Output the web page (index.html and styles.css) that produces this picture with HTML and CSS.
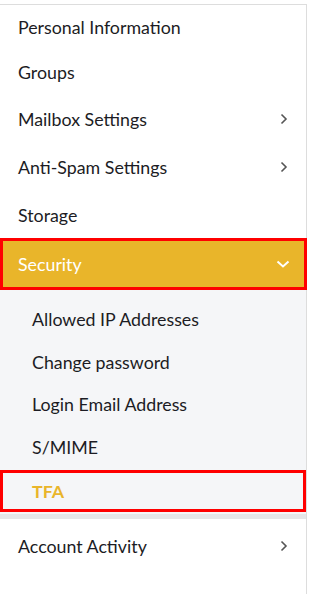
FILE: index.html
```html
<!DOCTYPE html>
<html>
<head>
<meta charset="utf-8">
<link rel="stylesheet" href="styles.css">
</head>
<body>
<nav class="panel">
  <div class="row first"><span>Personal Information</span></div>
  <div class="row second"><span>Groups</span></div>
  <div class="row tall"><span>Mailbox Settings</span>
    <svg class="chev" width="8" height="12" viewBox="0 0 8 12"><path d="M1.5 1.5 L6 6 L1.5 10.5" fill="none" stroke="#555" stroke-width="1.6"/></svg></div>
  <div class="row tall"><span>Anti-Spam Settings</span>
    <svg class="chev" width="8" height="12" viewBox="0 0 8 12"><path d="M1.5 1.5 L6 6 L1.5 10.5" fill="none" stroke="#555" stroke-width="1.6"/></svg></div>
  <div class="row"><span>Storage</span></div>
  <div class="row active"><span>Security</span>
    <svg class="chev-down" width="14" height="8" viewBox="0 0 14 8"><path d="M1.5 1.5 L7 6.5 L12.5 1.5" fill="none" stroke="#fff" stroke-width="2"/></svg></div>
  <div class="sub">
    <div class="sub-row"><span>Allowed IP Addresses</span></div>
    <div class="sub-row"><span>Change password</span></div>
    <div class="sub-row"><span>Login Email Address</span></div>
    <div class="sub-row"><span>S/MIME</span></div>
    <div class="sub-row selected"><span>TFA</span></div>
  </div>
  <div class="row last"><span>Account Activity</span>
    <svg class="chev" width="8" height="12" viewBox="0 0 8 12"><path d="M1.5 1.5 L6 6 L1.5 10.5" fill="none" stroke="#555" stroke-width="1.6"/></svg></div>
</nav>
</body>
</html>
```
FILE: styles.css
```css
html, body {
  margin: 0;
  padding: 0;
  background: #fff;
}
body {
  font-family: Lato, "Open Sans", sans-serif;
  font-size: 17.8px;
  color: #1c1c24;
}
.panel {
  margin-top: 4px;
  width: 307px;
  height: 590px;
  border-top: 1px solid #dddddd;
  border-right: 1px solid #dddddd;
  box-sizing: border-box;
}
.row {
  height: 47px;
  display: flex;
  align-items: center;
  justify-content: space-between;
  padding: 0 18px 0 18px;
  box-sizing: border-box;
}
.row.first {
  height: 44px;
}
.row.second {
  height: 46px;
}
.row.tall {
  height: 48px;
}
.row.active {
  height: 52px;
  background: #e9b52a;
  border: 3px solid #ff0000;
  padding-left: 15px;
  padding-right: 14px;
  color: #fff;
  margin-right: -1px;
}
.sub {
  background: #f5f6f8;
  padding-top: 8px;
  border-bottom: 5px solid #e6e6e8;
}
.sub-row {
  height: 42.5px;
  display: flex;
  align-items: center;
  padding-left: 32px;
  box-sizing: border-box;
}
.sub-row.selected {
  height: 42px;
  margin-top: 2px;
  margin-bottom: 2px;
  border: 3px solid #ff0000;
  padding-left: 29px;
  color: #e9b52a;
  font-weight: bold;
}
.row.last {
  height: 54px;
}
```
